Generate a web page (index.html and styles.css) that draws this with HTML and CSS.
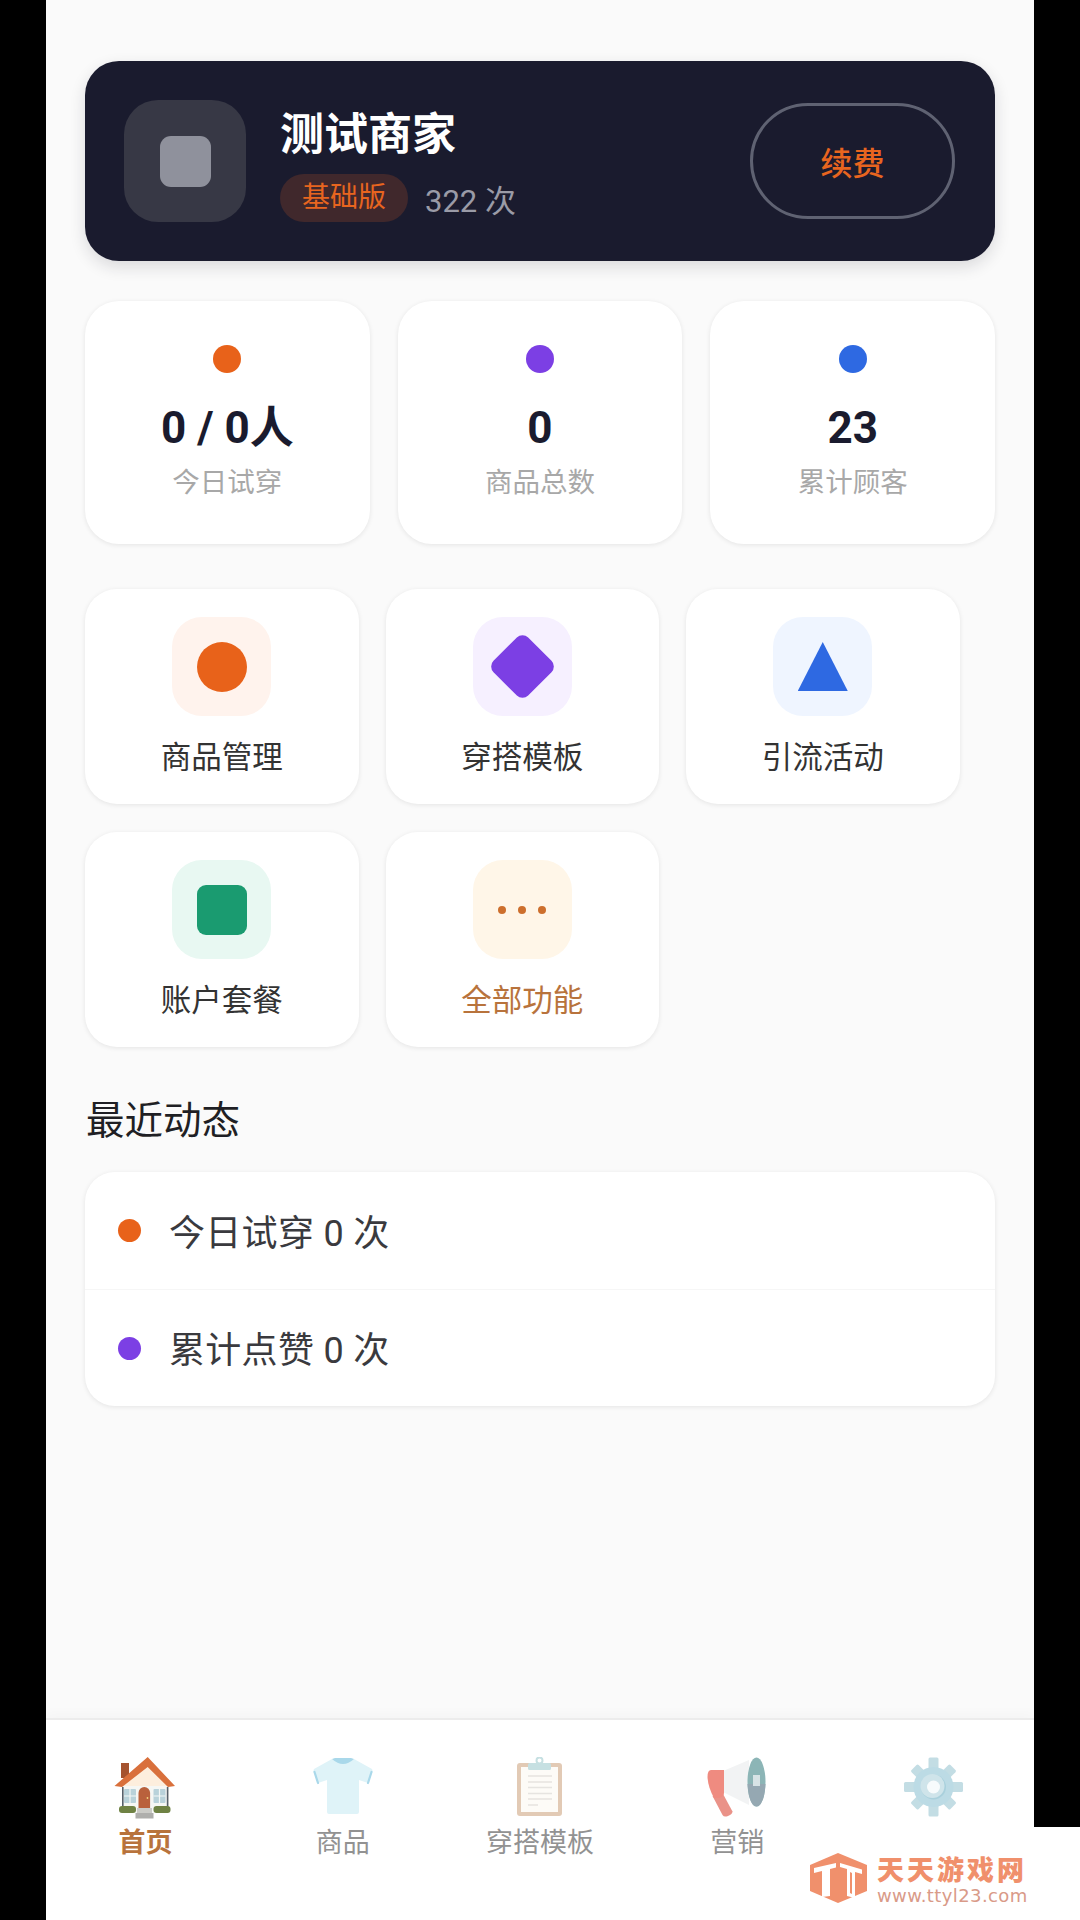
FILE: index.html
```html
<!DOCTYPE html>
<html lang="zh-CN">
<head>
<meta charset="utf-8">
<title>首页</title>
<link rel="stylesheet" href="styles.css">
</head>
<body>
<div class="app">
  <main class="main">
    <section class="hero">
      <div class="avatar"><span class="avatar-in"></span></div>
      <div class="hero-info">
        <div class="hero-name">测试商家</div>
        <div class="hero-meta"><span class="pill">基础版</span><span class="count">322 次</span></div>
      </div>
      <div class="renew">续费</div>
    </section>

    <section class="stats">
      <div class="stat"><span class="dot dot-orange"></span><div class="stat-val">0 / 0人</div><div class="stat-lab">今日试穿</div></div>
      <div class="stat"><span class="dot dot-purple"></span><div class="stat-val">0</div><div class="stat-lab">商品总数</div></div>
      <div class="stat"><span class="dot dot-blue"></span><div class="stat-val">23</div><div class="stat-lab">累计顾客</div></div>
    </section>

    <section class="tiles">
      <div class="tile"><div class="tile-icon bg-orange"><span class="shape-circle"></span></div><div class="tile-lab">商品管理</div></div>
      <div class="tile"><div class="tile-icon bg-purple"><span class="shape-diamond"></span></div><div class="tile-lab">穿搭模板</div></div>
      <div class="tile"><div class="tile-icon bg-blue"><span class="shape-tri"></span></div><div class="tile-lab">引流活动</div></div>
      <div class="tile"><div class="tile-icon bg-green"><span class="shape-square"></span></div><div class="tile-lab">账户套餐</div></div>
      <div class="tile"><div class="tile-icon bg-amber"><span class="mini"></span><span class="mini"></span><span class="mini"></span></div><div class="tile-lab tile-lab-accent">全部功能</div></div>
    </section>

    <h2 class="sec-title">最近动态</h2>
    <section class="list">
      <div class="row"><span class="row-dot dot-orange"></span><span class="row-text">今日试穿 0 次</span></div>
      <div class="row"><span class="row-dot dot-purple"></span><span class="row-text">累计点赞 0 次</span></div>
    </section>
  </main>

  <nav class="nav">
    <div class="nav-item nav-active">
      <svg class="nav-svg" viewBox="0 0 64 64">
        <rect x="7" y="6" width="8" height="15" fill="#a5532f"/>
        <path d="M33.7 5 L54.5 28 V56 H8 V28 Z" fill="#fdeedd"/>
        <rect x="8" y="29" width="46.5" height="27" fill="#f6f7f4"/>
        <path d="M0.5 29 L33.7 0 L61 29 L54 30 L33.7 10 L8 30 Z" fill="#d9703c"/>
        <rect x="8" y="30" width="1.6" height="22" fill="#56606a"/>
        <rect x="52.8" y="30" width="1.6" height="22" fill="#56606a"/>
        <rect x="10" y="32" width="12" height="14" rx="1" fill="#b9d2da"/>
        <rect x="39.5" y="32" width="12" height="14" rx="1" fill="#b9d2da"/>
        <path d="M16 32v14M10 39h12M45.5 32v14M39.5 39h12" stroke="#f4f7f6" stroke-width="1.2"/>
        <path d="M24.5 51 V36 a5.8 6 0 0 1 11.6 0 V51 Z" fill="#b9613c"/>
        <circle cx="33.5" cy="41" r="0.9" fill="#f0d27a"/>
        <rect x="5" y="49" width="17" height="7" rx="3" fill="#6f8244"/>
        <rect x="39.5" y="49" width="17" height="7" rx="3" fill="#6f8244"/>
        <rect x="23" y="51" width="15" height="5" fill="#cbcbc7"/>
        <rect x="21.5" y="56" width="18" height="5.5" fill="#aeaeac"/>
      </svg>
      <span class="nav-lab">首页</span>
    </div>
    <div class="nav-item">
      <svg class="nav-svg" viewBox="0 0 64 64">
        <path d="M21 2 Q32 7 43 2 L61 12 Q62 14 61 16 L57 26 L48 23 V55 Q48 57 46 57 H18 Q16 57 16 55 V23 L7 26 L3 16 Q2 14 3 12 Z" fill="#dff3f8"/>
        <path d="M21 2 Q32 12 43 2 L40 1 H24 Z" fill="#a9d8ea"/>
        <path d="M3.5 15 L7 26 M60.5 15 L57 26" stroke="#a9d8ea" stroke-width="2.2" stroke-linecap="round"/>
      </svg>
      <span class="nav-lab">商品</span>
    </div>
    <div class="nav-item">
      <svg class="nav-svg" viewBox="0 0 64 64">
        <rect x="9" y="6" width="45" height="53" rx="3" fill="#e2cab5"/>
        <rect x="13" y="10" width="37" height="45" fill="#fdfbf7"/>
        <rect x="20" y="6" width="23" height="7" rx="1.5" fill="#c6e0e2"/>
        <circle cx="31.5" cy="3.5" r="3" fill="none" stroke="#c6e0e2" stroke-width="2"/>
        <path d="M20 19h24M20 25h24M20 30.5h24M20 36.5h24M20 42h24M20 48h10" stroke="#e6e4e0" stroke-width="1.4"/>
      </svg>
      <span class="nav-lab">穿搭模板</span>
    </div>
    <div class="nav-item">
      <svg class="nav-svg" viewBox="0 0 64 64">
        <path d="M17 14.5 L44 3 V48 L17 34.5 Z" fill="#f2f3f4"/>
        <path d="M7.5 39 L17.5 36 L27.5 54.5 Q27.5 57 23 59 Q19 60.5 17.5 58 Z" fill="#ea9288"/>
        <path d="M6 13 H19 V36 Q19 40 14 41 H9 Q3 30 2.5 20 Q2.5 13 6 13 Z" fill="#ef8b80"/>
        <ellipse cx="51.5" cy="25" rx="9" ry="24.5" fill="#8cb5b6"/>
        <path d="M42.5 27 H60.5 Q59 49 51.5 49.5 Q44 49 42.5 27 Z" fill="#95a8b2"/>
        <path d="M48 18 H55 V29 H48 Z" fill="#d7e3e5"/>
      </svg>
      <span class="nav-lab">营销</span>
    </div>
    <div class="nav-item">
      <svg class="nav-svg" viewBox="0 0 64 64">
        <g fill="#c3dde4">
          <rect x="26.5" y="0.5" width="10" height="59" rx="1.5"/>
          <rect x="2" y="25" width="59" height="10" rx="1.5"/>
          <rect x="26.5" y="2.5" width="10" height="55" rx="1.5" transform="rotate(45 31.5 30)"/>
          <rect x="26.5" y="2.5" width="10" height="55" rx="1.5" transform="rotate(-45 31.5 30)"/>
        </g>
        <circle cx="31.5" cy="30" r="20" fill="#bcdbe5"/>
        <circle cx="31.5" cy="30" r="12.5" fill="#a9d0dc"/>
        <circle cx="30.5" cy="29" r="12" fill="#cfe4ea"/>
        <circle cx="31.5" cy="30" r="6.5" fill="#f7fbfc"/>
      </svg>
      <span class="nav-lab nav-lab-empty"></span>
    </div>
  </nav>
</div>

<aside class="mark">
  <svg class="mark-logo" viewBox="0 0 58 50">
    <path d="M29 0 L58 12 V38 L29 50 L1 38 V12 Z" fill="#f0906c"/>
    <path d="M5 15 L27 10 V14.5 L21 16 V43 L13 44 V18 L5 20 Z" fill="#ffffff"/>
    <path d="M31 10 L53 16.5 V21 L46 19 V45 L38 43 V16 L31 14 Z" fill="#ffffff"/>
    <path d="M41 19 L43 20 V41 L41 40 Z" fill="#f0906c"/>
  </svg>
  <div class="mark-text">
    <div class="mark-cn">天天游戏网</div>
    <div class="mark-en">www.ttyl23.com</div>
  </div>
</aside>
</body>
</html>
```

FILE: styles.css
```css
* { box-sizing: border-box; }
html, body { margin: 0; padding: 0; }
body {
  width: 1080px;
  height: 1920px;
  background: #000;
  overflow: hidden;
  position: relative;
  font-family: Roboto, "Noto Sans CJK SC", sans-serif;
  padding-left: 46px;
}
.app {
  width: 988px;
  height: 1920px;
  background: #fafafa;
  display: flex;
  flex-direction: column;
}
.main {
  flex: 1;
  padding: 61px 39px 0;
}

/* hero */
.hero {
  height: 200px;
  background: #1a1b2e;
  border-radius: 34px;
  box-shadow: 0 6px 16px rgba(26, 27, 46, .14);
  display: flex;
  align-items: center;
  padding: 0 40px 0 39px;
}
.avatar {
  width: 122px;
  height: 122px;
  border-radius: 34px;
  background: #373845;
  display: flex;
  align-items: center;
  justify-content: center;
}
.avatar-in {
  width: 51px;
  height: 51px;
  border-radius: 11px;
  background: #8f919c;
}
.hero-info {
  flex: 1;
  margin-left: 34px;
  margin-top: 7px;
}
.hero-name {
  font-size: 44px;
  line-height: 56px;
  font-weight: 700;
  color: #fff;
}
.hero-meta {
  display: flex;
  align-items: center;
  margin-top: 11px;
}
.pill {
  height: 48px;
  line-height: 48px;
  padding: 0 22px;
  border-radius: 24px;
  background: #40282c;
  color: #e8651f;
  font-size: 28px;
}
.count {
  margin-left: 17px;
  margin-top: 1px;
  font-size: 31px;
  color: #9a9ba7;
}
.renew {
  width: 205px;
  height: 116px;
  border: 3px solid #5f6272;
  border-radius: 58px;
  color: #e8651f;
  font-size: 32px;
  font-weight: 500;
  display: flex;
  align-items: center;
  justify-content: center;
}

/* stats */
.stats {
  display: grid;
  grid-template-columns: repeat(3, 1fr);
  gap: 28px;
  margin-top: 40px;
}
.stat, .tile, .list {
  background: #fff;
  box-shadow: 0 1px 5px rgba(0, 0, 0, .09);
}
.stat {
  height: 243px;
  border-radius: 34px;
  padding-top: 44px;
  display: flex;
  flex-direction: column;
  align-items: center;
}
.dot { width: 28px; height: 28px; border-radius: 50%; }
.dot-orange { background: #e8621a; }
.dot-purple { background: #7c3fe4; }
.dot-blue { background: #2e69e2; }
.stat-val {
  margin-top: 27px;
  font-size: 44px;
  line-height: 56px;
  font-weight: 700;
  color: #1a1b2e;
}
.stat-lab {
  margin-top: 7px;
  font-size: 27.5px;
  line-height: 40px;
  color: #a8a8a8;
}

/* tiles */
.tiles {
  display: grid;
  grid-template-columns: repeat(3, 273.5px);
  column-gap: 27px;
  row-gap: 28px;
  margin-top: 45px;
}
.tile {
  height: 215px;
  border-radius: 32px;
  padding-top: 28px;
  display: flex;
  flex-direction: column;
  align-items: center;
}
.tile-icon {
  width: 99px;
  height: 99px;
  border-radius: 30px;
  display: flex;
  align-items: center;
  justify-content: center;
  gap: 12px;
}
.bg-orange { background: #fff3ed; }
.bg-purple { background: #f6f0ff; }
.bg-blue { background: #eff5ff; }
.bg-green { background: #e8f8f2; }
.bg-amber { background: #fff6e8; }
.shape-circle { width: 50px; height: 50px; border-radius: 50%; background: #e8621a; }
.shape-diamond { width: 49px; height: 49px; border-radius: 8px; background: #7c3fe4; transform: rotate(45deg); }
.shape-tri {
  width: 50px;
  height: 49px;
  background: #2e69e2;
  clip-path: polygon(50% 0, 100% 100%, 0 100%);
}
.shape-square { width: 50px; height: 50px; border-radius: 9px; background: #1a9b70; }
.mini { width: 8px; height: 8px; border-radius: 50%; background: #cd6f2d; }
.tile-lab {
  margin-top: 22px;
  font-size: 30.5px;
  line-height: 40px;
  color: #333;
}
.tile-lab-accent { color: #b8733c; }

/* recent */
.sec-title {
  margin: 47px 0 24px 1px;
  font-size: 38.5px;
  line-height: 54px;
  font-weight: 400;
  color: #1f1f24;
}
.list {
  border-radius: 30px;
  overflow: hidden;
}
.row {
  height: 117px;
  display: flex;
  align-items: center;
  padding-left: 33px;
  font-size: 36px;
  color: #3a3a3e;
}
.row + .row { border-top: 1px solid #f6f6f6; }
.row-text {
  margin-bottom: 2px;
  letter-spacing: .3px;
}
.row-dot {
  width: 23px;
  height: 23px;
  border-radius: 50%;
  margin-right: 28px;
}

/* bottom nav */
.nav {
  height: 202px;
  background: #fff;
  border-top: 2px solid #ececec;
  box-shadow: 0 -6px 10px rgba(0, 0, 0, .018);
  display: grid;
  grid-template-columns: repeat(5, 1fr);
  padding: 37px 1px 0;
}
.nav-item {
  display: flex;
  flex-direction: column;
  align-items: center;
}
.nav-svg { width: 64px; height: 64px; display: block; }
.nav-lab {
  margin-top: 2px;
  font-size: 27px;
  line-height: 40px;
  color: #929292;
}
.nav-active .nav-lab { color: #b8733c; font-weight: 700; }
.nav-lab-empty { height: 40px; }

/* watermark */
.mark {
  position: absolute;
  right: 0;
  bottom: 0;
  width: 280px;
  height: 93px;
  background: #fff;
  display: flex;
  align-items: flex-start;
  padding: 26px 0 0 9px;
}
.mark-logo { width: 58px; height: 50px; display: block; }
.mark-text { margin-left: 10px; margin-top: 2px; }
.mark-cn {
  font-family: "Liberation Sans", "Noto Sans CJK SC", sans-serif;
  font-size: 27px;
  line-height: 32px;
  letter-spacing: 3px;
  font-weight: 900;
  color: #f0906c;
}
.mark-en {
  font-family: "DejaVu Sans", sans-serif;
  font-size: 18px;
  line-height: 18px;
  letter-spacing: .4px;
  color: #d99a88;
}
```
